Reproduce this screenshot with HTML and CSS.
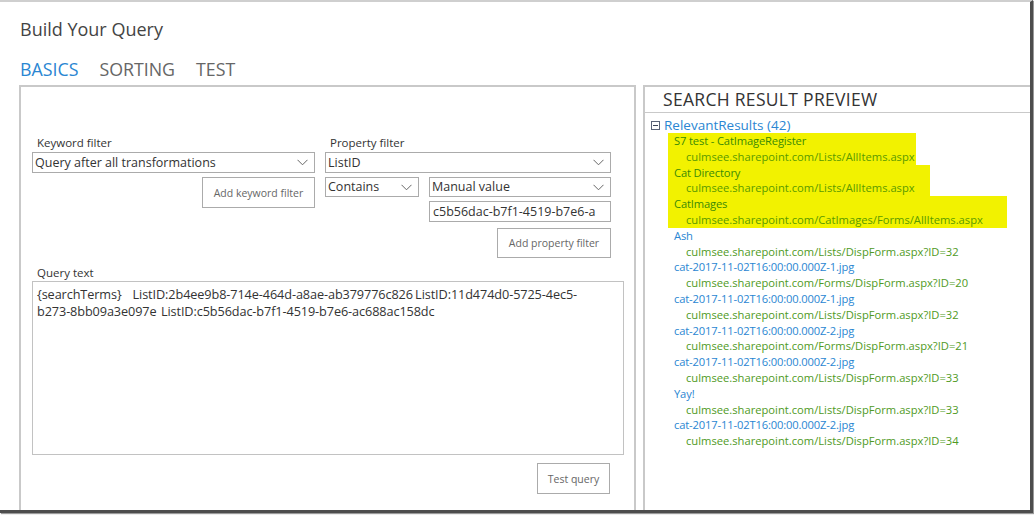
FILE: index.html
```html
<!DOCTYPE html>
<html>
<head>
<meta charset="utf-8">
<link rel="stylesheet" href="styles.css">
</head>
<body>
<div class="frame">
  <h1 class="title">Build Your Query</h1>
  <nav class="tabs">
    <span class="tab active">BASICS</span>
    <span class="tab">SORTING</span>
    <span class="tab">TEST</span>
  </nav>
  <div class="panels">
    <section class="builder">
      <div class="filters">
        <div class="col kw">
          <div class="label">Keyword filter</div>
          <div class="select wide"><span>Query after all transformations</span><svg class="chev" width="11" height="7" viewBox="0 0 11 7"><path d="M0.5 0.8 L5.5 5.8 L10.5 0.8" fill="none" stroke="#666" stroke-width="1"/></svg></div>
          <div class="btnrow"><button class="btn kwbtn">Add keyword filter</button></div>
        </div>
        <div class="col pf">
          <div class="label">Property filter</div>
          <div class="select wide"><span>ListID</span><svg class="chev" width="11" height="7" viewBox="0 0 11 7"><path d="M0.5 0.8 L5.5 5.8 L10.5 0.8" fill="none" stroke="#666" stroke-width="1"/></svg></div>
          <div class="pair">
            <div class="select op"><span>Contains</span><svg class="chev" width="11" height="7" viewBox="0 0 11 7"><path d="M0.5 0.8 L5.5 5.8 L10.5 0.8" fill="none" stroke="#666" stroke-width="1"/></svg></div>
            <div class="select val"><span>Manual value</span><svg class="chev" width="11" height="7" viewBox="0 0 11 7"><path d="M0.5 0.8 L5.5 5.8 L10.5 0.8" fill="none" stroke="#666" stroke-width="1"/></svg></div>
          </div>
          <div class="inputrow"><div class="input">c5b56dac-b7f1-4519-b7e6-a</div></div>
          <div class="btnrow"><button class="btn pfbtn">Add property filter</button></div>
        </div>
      </div>
      <div class="label qlabel">Query text</div>
      <div class="textarea">{searchTerms}&nbsp;&nbsp;&nbsp;&nbsp; ListID:2b4ee9b8-714e-464d-a8ae-ab379776c826 ListID:11d474d0-5725-4ec5-b273-8bb09a3e097e&nbsp; ListID:c5b56dac-b7f1-4519-b7e6-ac688ac158dc</div>
      <div class="testrow"><button class="btn testbtn">Test query</button></div>
    </section>
    <section class="preview">
      <header class="phead">SEARCH RESULT PREVIEW</header>
      <div class="tree">
        <div class="root"><svg class="minus" width="9" height="9" viewBox="0 0 9 9"><rect x="0.5" y="0.5" width="8" height="8" fill="#fff" stroke="#5b6478"/><path d="M2 4.5 H7" stroke="#3c4458" stroke-width="1"/></svg><span>RelevantResults (42)</span></div>
        <div class="items">
          <div class="group hl w1"><div class="t">S7 test - CatImageRegister</div><div class="u">culmsee.sharepoint.com/Lists/AllItems.aspx</div></div>
          <div class="group hl w2"><div class="t">Cat Directory</div><div class="u">culmsee.sharepoint.com/Lists/AllItems.aspx</div></div>
          <div class="group hl w3"><div class="t">CatImages</div><div class="u">culmsee.sharepoint.com/CatImages/Forms/AllItems.aspx</div></div>
          <div class="group"><div class="t">Ash</div><div class="u">culmsee.sharepoint.com/Lists/DispForm.aspx?ID=32</div></div>
          <div class="group"><div class="t">cat-2017-11-02T16:00:00.000Z-1.jpg</div><div class="u">culmsee.sharepoint.com/Forms/DispForm.aspx?ID=20</div></div>
          <div class="group"><div class="t">cat-2017-11-02T16:00:00.000Z-1.jpg</div><div class="u">culmsee.sharepoint.com/Lists/DispForm.aspx?ID=32</div></div>
          <div class="group"><div class="t">cat-2017-11-02T16:00:00.000Z-2.jpg</div><div class="u">culmsee.sharepoint.com/Forms/DispForm.aspx?ID=21</div></div>
          <div class="group"><div class="t">cat-2017-11-02T16:00:00.000Z-2.jpg</div><div class="u">culmsee.sharepoint.com/Lists/DispForm.aspx?ID=33</div></div>
          <div class="group"><div class="t">Yay!</div><div class="u">culmsee.sharepoint.com/Lists/DispForm.aspx?ID=33</div></div>
          <div class="group"><div class="t">cat-2017-11-02T16:00:00.000Z-2.jpg</div><div class="u">culmsee.sharepoint.com/Lists/DispForm.aspx?ID=34</div></div>
        </div>
      </div>
    </section>
  </div>
</div>
</body>
</html>
```
FILE: styles.css
```css
* { box-sizing: border-box; }
html, body { margin: 0; padding: 0; background: #fff; }
body {
  font-family: "Open Sans", "Noto Sans", "Liberation Sans", sans-serif;
  color: #333;
  width: 1034px;
  height: 515px;
  overflow: hidden;
}
.frame {
  width: 1033px;
  height: 513px;
  border-top: 2px solid #cfcfcf;
  border-right: 3px solid #4d4d4d;
  border-bottom: 3px solid #4d4d4d;
  box-shadow: 1px 1px 1px #9a9a9a;
  display: flex;
  flex-direction: column;
  overflow: hidden;
}
.title {
  margin: 14px 0 0 20px;
  font-size: 18px;
  font-weight: 400;
  color: #444;
  line-height: 26px;
  height: 26px;
}
.tabs {
  margin: 14px 0 0 20px;
  display: flex;
  gap: 21px;
  height: 26px;
  line-height: 26px;
  font-size: 17.8px;
  color: #666;
}
.tab.active { color: #2a86d2; }
.panels {
  flex: 1;
  display: flex;
  gap: 7px;
  padding-left: 19px;
  margin-top: 3px;
  min-height: 0;
}
.builder {
  width: 617px;
  border: 2px solid #c9c9c9;
  border-bottom: none;
  padding: 48px 0 0 11px;
  display: flex;
  flex-direction: column;
}
.filters {
  display: flex;
  gap: 10px;
  height: 130px;
}
.col { display: flex; flex-direction: column; }
.kw { width: 283px; }
.pf { width: 286px; }
.label {
  font-size: 11.5px;
  line-height: 16px;
  height: 16px;
  padding-left: 5px;
  color: #333;
  margin-bottom: 1px;
}
.select {
  position: relative;
  height: 21px;
  border: 1px solid #ababab;
  font-size: 12.5px;
  line-height: 19px;
  padding-left: 2px;
  color: #333;
  white-space: nowrap;
}
.select .chev { position: absolute; right: 6px; top: 6px; }
.pair { display: flex; gap: 10px; margin-top: 4px; }
.select.op { width: 94px; height: 20px; line-height: 18px; }
.select.val { width: 182px; height: 20px; line-height: 18px; }
.inputrow { display: flex; justify-content: flex-end; margin-top: 4px; }
.input {
  width: 182px;
  height: 21px;
  border: 1px solid #ababab;
  font-size: 12.5px;
  line-height: 19px;
  padding-left: 3px;
  white-space: nowrap;
  overflow: hidden;
}
.btnrow { display: flex; justify-content: flex-end; margin-top: 4px; }
.pf .btnrow { margin-top: 6px; }
.btn {
  font-family: inherit;
  background: #fff;
  border: 1px solid #ababab;
  color: #666;
  font-size: 10.5px;
  height: 31px;
  padding: 0;
  cursor: default;
}
.kwbtn { width: 113px; }
.pfbtn { width: 114px; height: 30px; }
.testbtn { width: 73px; }
.qlabel { margin-top: 0; margin-bottom: 0; }
.textarea {
  width: 592px;
  height: 174px;
  border: 1px solid #c2c2c2;
  font-size: 12.7px;
  line-height: 17px;
  padding: 4px 26px 0 4px;
  color: #333;
  letter-spacing: -0.1px;
  word-spacing: -1px;
}
.testrow {
  width: 578px;
  display: flex;
  justify-content: flex-end;
  margin-top: 8px;
}
.preview {
  flex: 1;
  border-top: 2px solid #c9c9c9;
  border-left: 2px solid #c9c9c9;
  display: flex;
  flex-direction: column;
}
.phead {
  height: 26px;
  border-bottom: 1px solid #c9c9c9;
  font-size: 17.5px;
  line-height: 25px;
  padding-left: 18px;
  color: #333;
  letter-spacing: 0.3px;
}
.tree { padding: 4px 0 0 6px; }
.root {
  display: flex;
  align-items: center;
  gap: 4px;
  font-size: 13.5px;
  line-height: 16px;
  color: #2a86d2;
  height: 16px;
}
.root .minus { flex: none; }
.items { padding-left: 23px; margin-top: 0; }
.group { line-height: 15.8px; font-size: 11.2px; }
.group .t { color: #2a86d2; white-space: nowrap; letter-spacing: -0.15px; }
.group .u { color: #4f9a24; padding-left: 12px; white-space: nowrap; }
.group.hl { background: #f2f200; margin-left: -6px; padding-left: 6px; }
.group.hl .t { color: #3a8a06; }
.group.hl .u { color: #5a9a00; }
.w1 { width: 248px; }
.w2 { width: 262px; }
.w3 { width: 339px; }
```
